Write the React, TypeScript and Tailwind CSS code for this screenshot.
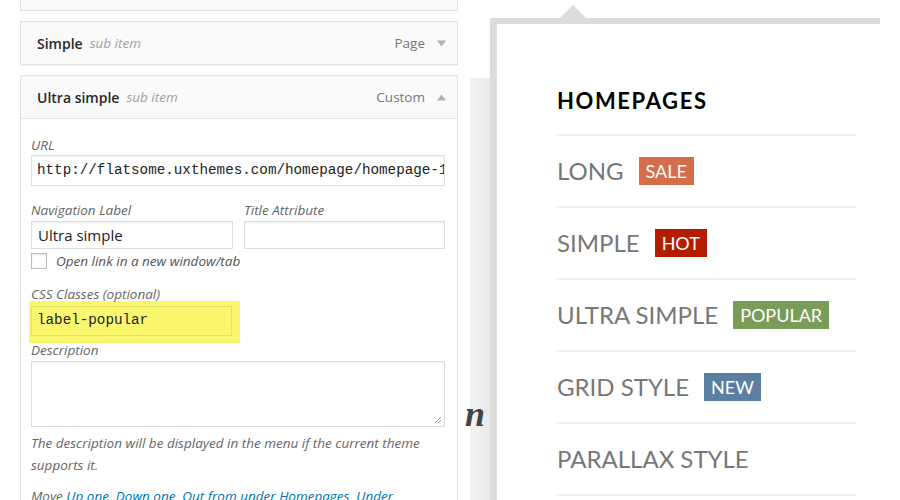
import React from "react";

const wp = { fontFamily: '"Open Sans", "Noto Sans", sans-serif' };
const mono = { fontFamily: '"Liberation Mono", "DejaVu Sans Mono", monospace' };
const lato = { fontFamily: 'Lato, "Open Sans", sans-serif' };

function Arrow({ up }: { up?: boolean }) {
  return (
    <svg width="9" height="7" viewBox="0 0 9 7" className="ml-[12px]">
      <path d={up ? "M0 6.5 L4.5 0.5 L9 6.5 Z" : "M0 0.5 L4.5 6.5 L9 0.5 Z"} fill="#b0b0b0" />
    </svg>
  );
}

function ItemHeader({ title, type, open }: { title: string; type: string; open?: boolean }) {
  return (
    <div className="flex h-[42px] items-center bg-[#fafafa] pl-[16px] pr-[11px]">
      <span className="text-[14px] font-semibold text-[#23282d]">{title}</span>
      <span className="ml-[7px] text-[13.5px] italic text-[#a0a0a0]">sub item</span>
      <span className="ml-auto text-[13.5px] text-[#777]">{type}</span>
      <Arrow up={open} />
    </div>
  );
}

const menu = [
  { label: "LONG", badge: "SALE", color: "bg-[#d26e4b]" },
  { label: "SIMPLE", badge: "HOT", color: "bg-[#b41c00]" },
  { label: "ULTRA SIMPLE", badge: "POPULAR", color: "bg-[#7a9c59]" },
  { label: "GRID STYLE", badge: "NEW", color: "bg-[#5b7fa0]" },
  { label: "PARALLAX STYLE" },
];

export default function App() {
  return (
    <div className="flex h-[500px] w-[900px] overflow-hidden bg-white" style={wp}>
      {/* menu editor */}
      <div className="flex w-[470px] shrink-0 flex-col gap-[10px] pl-[20px] pr-[12px]">
        <div className="h-[11px] shrink-0 border border-t-0 border-[#e2e2e2] bg-[#fafafa]" />
        <div className="shrink-0 border border-[#e2e2e2] shadow-[0_1px_1px_rgba(0,0,0,0.04)]">
          <ItemHeader title="Simple" type="Page" />
        </div>
        <div className="shrink-0 border border-b-0 border-[#e2e2e2]">
          <ItemHeader title="Ultra simple" type="Custom" open />
          <div className="border-t border-[#e5e5e5] pb-[20px] pl-[10px] pr-[12px] pt-[17px] text-[13.5px] italic text-[#666]">
            <div className="leading-[18px]">URL</div>
            <div className="mt-[1px] flex h-[31px] items-center overflow-hidden whitespace-nowrap border border-[#ddd] pl-[5px] text-[14.25px] not-italic text-[#222] shadow-[inset_0_1px_2px_rgba(0,0,0,0.07)]" style={mono}>
              http://flatsome.uxthemes.com/homepage/homepage-1
            </div>
            <div className="mt-[15px] flex gap-[11px]">
              <div className="w-[202px]">
                <div className="leading-[18px]">Navigation Label</div>
                <div className="mt-[2px] flex h-[28px] items-center border border-[#ddd] pl-[6px] text-[15px] not-italic text-[#222] shadow-[inset_0_1px_2px_rgba(0,0,0,0.07)]">
                  Ultra simple
                </div>
              </div>
              <div className="flex-1">
                <div className="leading-[18px]">Title Attribute</div>
                <div className="mt-[2px] h-[28px] border border-[#ddd] shadow-[inset_0_1px_2px_rgba(0,0,0,0.07)]" />
              </div>
            </div>
            <div className="mt-[3px] flex items-center leading-[18px]">
              <div className="h-[16px] w-[16px] border border-[#bbb] shadow-[inset_0_1px_2px_rgba(0,0,0,0.1)]" />
              <span className="ml-[9px] text-[#555]">Open link in a new window/tab</span>
            </div>
            <div className="mt-[15px] leading-[18px]">CSS Classes (optional)</div>
            <div className="-ml-[2px] -mt-[2px] w-[211px] bg-[#faf76e] pb-[7px] pl-[2px] pr-[8px] pt-[5px]">
              <div className="flex h-[30px] items-center border border-[#e2df6a] pl-[5px] text-[14.25px] not-italic text-[#222]" style={mono}>
                label-popular
              </div>
            </div>
            <div className="-mt-[2px] leading-[18px]">Description</div>
            <div className="relative mt-[2px] h-[66px] border border-[#ddd] shadow-[inset_0_1px_2px_rgba(0,0,0,0.07)]">
              <svg width="8" height="8" viewBox="0 0 8 8" className="absolute bottom-[2px] right-[2px]">
                <path d="M1 7 L7 1 M4 7 L7 4" stroke="#999" strokeWidth="1" />
              </svg>
            </div>
            <p className="mt-[5px] leading-[22px]">
              The description will be displayed in the menu if the current theme supports it.
            </p>
            <p className="mt-[9px] whitespace-nowrap leading-[22px]">
              Move <span className="text-[#0073aa] underline">Up one</span>, <span className="text-[#0073aa] underline">Down one</span>,{" "}
              <span className="text-[#0073aa] underline">Out from under Homepages</span>, <span className="text-[#0073aa] underline">Under</span>
            </p>
          </div>
        </div>
      </div>

      {/* site background strip */}
      <div className="flex w-[20px] shrink-0 flex-col pt-[78px]">
        <div className="relative flex-1 bg-gradient-to-r from-[#f3f3f3] to-[#e9e9e9]">
          <span className="absolute -left-[5px] top-[318px] text-[36px] font-bold italic leading-none text-[#444]" style={{ fontFamily: '"Liberation Serif", serif' }}>
            n
          </span>
        </div>
      </div>

      {/* dropdown */}
      <div className="relative mt-[18px] w-[390px] shrink-0 border-l-[7px] border-t-[6px] border-[#dcdcdc] bg-white" style={lato}>
        <div className="absolute -top-[19px] left-[63px] h-0 w-0 border-b-[13px] border-l-[13px] border-r-[13px] border-b-[#dcdcdc] border-l-transparent border-r-transparent" />
        <div className="ml-[60px] mr-[23px] pt-[58px]">
          <div className="flex h-[54px] items-center border-b-2 border-[#f1f1f1] pb-[16px] text-[22px] font-bold tracking-[1.6px] text-black">
            HOMEPAGES
          </div>
          {menu.map((m) => (
            <div key={m.label} className="flex h-[72px] items-center gap-[15px] border-b-2 border-[#f1f1f1]">
              <span className="text-[24px] text-[#777]">{m.label}</span>
              {m.badge && (
                <span className={`${m.color} px-[7px] text-[18px] leading-[28px] text-white`}>{m.badge}</span>
              )}
            </div>
          ))}
        </div>
      </div>
    </div>
  );
}
